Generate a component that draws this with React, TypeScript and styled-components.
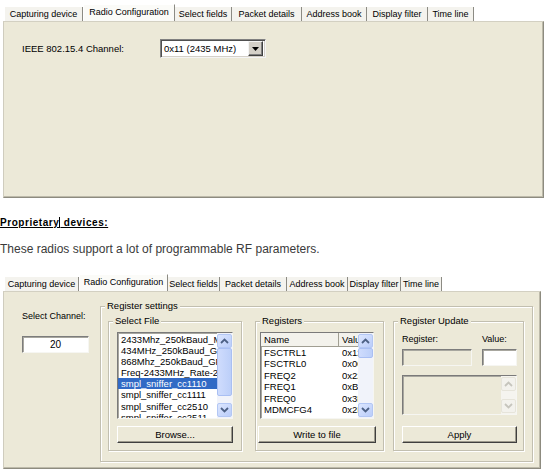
import React from "react";
import styled, { createGlobalStyle, css } from "styled-components";

const FACE = "#ECE9D8";

const GlobalStyle = createGlobalStyle`
  html, body { margin: 0; padding: 0; background: #fff; }
  body { font-family: "Liberation Sans", Arial, sans-serif; color: #000; }
`;

const Page = styled.div`
  width: 550px;
  height: 472px;
  overflow: hidden;
  box-sizing: border-box;
  padding-top: 4px;
  display: flex;
  flex-direction: column;
`;

const TabRow = styled.div`
  display: flex;
  align-items: flex-end;
  height: 17px;
  padding-left: 5px;
`;

const Tab = styled.div<{ $w: number; $active?: boolean }>`
  box-sizing: border-box;
  width: ${(p) => p.$w}px;
  height: ${(p) => (p.$active ? 17 : 14)}px;
  display: flex;
  align-items: center;
  justify-content: center;
  font-size: 9px;
  white-space: nowrap;
  background: #f4f3ee;
  border-right: 1px solid #8c8b84;
  ${(p) =>
    p.$active &&
    css`
      background: #fbfbf8;
      border-left: 1px solid #fff;
      border-top: 1px solid #fff;
      padding-bottom: 3px;
    `}
`;

const Panel = styled.div<{ $w: number; $h: number }>`
  box-sizing: border-box;
  margin-left: 3px;
  width: ${(p) => p.$w}px;
  height: ${(p) => p.$h}px;
  background: ${FACE};
  border: 1px solid;
  border-color: #d3d0c2 #8d8b7f #8d8b7f #cfccbe;
  box-shadow: inset -1px -1px 0 #bdbaaa;
`;

const ChannelRow = styled.div`
  display: flex;
  align-items: center;
  padding: 17px 0 0 18px;
  font-size: 9.5px;
`;

const FieldLabel = styled.span<{ $w: number }>`
  width: ${(p) => p.$w}px;
`;

const Combo = styled.div`
  box-sizing: border-box;
  width: 106px;
  height: 19px;
  display: flex;
  align-items: center;
  justify-content: space-between;
  padding: 0 2px 0 3px;
  background: #fff;
  border: 1px solid;
  border-color: #808080 #f4f4f4 #f4f4f4 #808080;
  box-shadow: inset 1px 1px 0 #505050, inset -1px -1px 0 #d4d0c8;
  font-size: 9.5px;
`;

const ComboButton = styled.div`
  box-sizing: border-box;
  width: 15px;
  height: 15px;
  display: flex;
  align-items: center;
  justify-content: center;
  background: #d4d0c8;
  border: 1px solid;
  border-color: #f4f4f4 #404040 #404040 #f4f4f4;
  box-shadow: inset -1px -1px 0 #808080;
`;

const Heading = styled.div`
  margin-top: 18px;
  line-height: 13px;
  font-size: 10px;
  font-weight: bold;
  letter-spacing: 0.55px;
  text-decoration: underline;
`;

const Caret = styled.span`
  display: inline-block;
  width: 1px;
  height: 11px;
  margin-bottom: -2px;
  background: #000;
`;

const Paragraph = styled.p`
  margin: 14px 0 18px;
  line-height: 13px;
  font-size: 12px;
  color: #3a3a3a;
`;

const RadioBody = styled.div`
  display: flex;
  padding: 14px 0 0 18px;
  font-size: 9px;
`;

const ChannelColumn = styled.div`
  width: 78px;
  display: flex;
  flex-direction: column;
`;

const SmallLabel = styled.div<{ $w?: number }>`
  line-height: 12px;
  ${(p) => p.$w && `width: ${p.$w}px;`}
`;

const ChannelLabel = styled(SmallLabel)`
  margin-top: 4px;
`;

const TextBox = styled.div<{ $w: number; $h: number; $disabled?: boolean; $center?: boolean }>`
  box-sizing: border-box;
  width: ${(p) => p.$w}px;
  height: ${(p) => p.$h}px;
  display: flex;
  align-items: center;
  justify-content: ${(p) => (p.$center ? "center" : "flex-start")};
  background: ${(p) => (p.$disabled ? FACE : "#fff")};
  border: 1px solid;
  border-color: #7c7c7c #f6f6f2 #f6f6f2 #7c7c7c;
  box-shadow: inset 1px 1px 0 #a8a79f;
  font-size: 10px;
`;

const ChannelBox = styled(TextBox)`
  margin-top: 14px;
`;

const GroupBox = styled.div<{ $w: number; $h: number; $ml?: number }>`
  box-sizing: border-box;
  width: ${(p) => p.$w}px;
  height: ${(p) => p.$h}px;
  margin-left: ${(p) => p.$ml ?? 0}px;
  display: flex;
  flex-direction: column;
  border: 1px solid #c2bfb0;
  box-shadow: inset 1px 1px 0 #fff, 1px 1px 0 #fff;
`;

const Caption = styled.div`
  align-self: flex-start;
  margin: -7px 0 0 4px;
  padding: 0 2px;
  line-height: 12px;
  background: ${FACE};
  font-size: 9.5px;
  white-space: nowrap;
`;

const InnerRow = styled.div`
  display: flex;
  margin-top: 9px;
  padding-left: 7px;
`;

const BoxContent = styled.div<{ $pl: number }>`
  flex: 1;
  display: flex;
  flex-direction: column;
  padding: 0 0 7px ${(p) => p.$pl}px;
`;

const ListFrame = styled.div<{ $w: number; $h: number; $mt?: number; $disabled?: boolean }>`
  box-sizing: border-box;
  width: ${(p) => p.$w}px;
  height: ${(p) => p.$h}px;
  margin-top: ${(p) => p.$mt ?? 5}px;
  display: flex;
  overflow: hidden;
  background: ${(p) => (p.$disabled ? FACE : "#fff")};
  border: 1px solid;
  border-color: #7a7a7a #f6f6f2 #f6f6f2 #7a7a7a;
  box-shadow: inset 1px 1px 0 #a8a79f;
`;

const ListItems = styled.div`
  flex: 1;
  min-width: 0;
  overflow: hidden;
  padding-top: 1px;
`;

const ListItem = styled.div<{ $selected?: boolean }>`
  height: 11.1px;
  line-height: 11px;
  padding-left: 3px;
  font-size: 9.5px;
  white-space: nowrap;
  overflow: hidden;
  ${(p) =>
    p.$selected &&
    css`
      background: #316ac5;
      color: #fff;
    `}
`;

const Grid = styled.div`
  flex: 1;
  min-width: 0;
  display: flex;
  flex-direction: column;
  overflow: hidden;
`;

const GridRow = styled.div<{ $header?: boolean }>`
  display: flex;
  flex-shrink: 0;
  height: ${(p) => (p.$header ? "13px" : "11.4px")};
  line-height: ${(p) => (p.$header ? "13px" : "11px")};
  font-size: 9.5px;
  ${(p) =>
    p.$header &&
    css`
      background: #f3f2ec;
      border-bottom: 1px solid #a09e92;
    `}
`;

const GridCell = styled.div<{ $w: number; $header?: boolean }>`
  box-sizing: border-box;
  width: ${(p) => p.$w}px;
  flex-shrink: 0;
  padding-left: 3px;
  overflow: hidden;
  white-space: nowrap;
  ${(p) => p.$header && `border-right: 1px solid #a09e92;`}
`;

const Scroll = styled.div<{ $disabled?: boolean }>`
  width: 15px;
  flex-shrink: 0;
  display: flex;
  flex-direction: column;
  padding: 1px 0;
  box-sizing: border-box;
  background: ${(p) => (p.$disabled ? "#f5f4ef" : "#f1f3fa")};
`;

const ScrollButton = styled.div<{ $disabled?: boolean }>`
  box-sizing: border-box;
  height: 14px;
  flex-shrink: 0;
  display: flex;
  align-items: center;
  justify-content: center;
  border-radius: 2px;
  border: 1px solid ${(p) => (p.$disabled ? "#e6e4da" : "#b3c7f4")};
  background: ${(p) => (p.$disabled ? "#f3f2ed" : "linear-gradient(135deg, #dce6fe, #bacdfa)")};
`;

const ScrollThumb = styled.div<{ $h: number }>`
  box-sizing: border-box;
  height: ${(p) => p.$h}px;
  flex-shrink: 0;
  border-radius: 2px;
  border: 1px solid #a9bff3;
  background: linear-gradient(90deg, #cfdcfd, #bccff9);
`;

const ScrollSpace = styled.div`
  flex: 1;
`;

const PushButton = styled.div<{ $w: number; $ml?: number }>`
  box-sizing: border-box;
  width: ${(p) => p.$w}px;
  height: 17px;
  margin-top: auto;
  margin-left: ${(p) => p.$ml ?? 0}px;
  display: flex;
  align-items: center;
  justify-content: center;
  background: ${FACE};
  border: 1px solid;
  border-color: #fff #3f3f3f #3f3f3f #fff;
  box-shadow: inset -1px -1px 0 #9d9a8c;
  font-size: 9.5px;
`;

const FieldRow = styled.div<{ $mt: number }>`
  display: flex;
  align-items: center;
  margin-top: ${(p) => p.$mt}px;
`;

const Gap = styled.div<{ $w: number }>`
  width: ${(p) => p.$w}px;
  flex-shrink: 0;
`;

const Chevron = ({ up, disabled }: { up?: boolean; disabled?: boolean }) => (
  <svg width="9" height="6" viewBox="0 0 9 6">
    <path
      d={up ? "M1 5 L4.5 1.5 L8 5" : "M1 1 L4.5 4.5 L8 1"}
      fill="none"
      stroke={disabled ? "#c6c5bd" : "#4d6185"}
      strokeWidth="1.8"
    />
  </svg>
);

const ScrollBar = ({ thumb, disabled }: { thumb?: number; disabled?: boolean }) => (
  <Scroll $disabled={disabled}>
    <ScrollButton $disabled={disabled}>
      <Chevron up disabled={disabled} />
    </ScrollButton>
    {thumb ? <ScrollThumb $h={thumb} /> : null}
    <ScrollSpace />
    <ScrollButton $disabled={disabled}>
      <Chevron disabled={disabled} />
    </ScrollButton>
  </Scroll>
);

const tabLabels = [
  "Capturing device",
  "Radio Configuration",
  "Select fields",
  "Packet details",
  "Address book",
  "Display filter",
  "Time line",
];

const TabStrip = ({ widths }: { widths: number[] }) => (
  <TabRow>
    {tabLabels.map((label, i) => (
      <Tab key={label} $w={widths[i]} $active={i === 1}>
        {label}
      </Tab>
    ))}
  </TabRow>
);

const files = [
  "2433Mhz_250kBaud_Modem",
  "434MHz_250kBaud_GFSK",
  "868Mhz_250kBaud_GFSK",
  "Freq-2433MHz_Rate-250k",
  "smpl_sniffer_cc1110",
  "smpl_sniffer_cc1111",
  "smpl_sniffer_cc2510",
  "smpl_sniffer_cc2511",
];

const registers: [string, string][] = [
  ["FSCTRL1", "0x12"],
  ["FSCTRL0", "0x00"],
  ["FREQ2", "0x22"],
  ["FREQ1", "0xB1"],
  ["FREQ0", "0x3B"],
  ["MDMCFG4", "0x2D"],
  ["MDMCFG3", "0x3B"],
];

const App: React.FC = () => (
  <Page>
    <GlobalStyle />
    <TabStrip widths={[78, 92, 57, 70, 65, 61, 46]} />
    <Panel $w={541} $h={177}>
      <ChannelRow>
        <FieldLabel $w={138}>IEEE 802.15.4 Channel:</FieldLabel>
        <Combo>
          <span>0x11 (2435 MHz)</span>
          <ComboButton>
            <svg width="7" height="4" viewBox="0 0 7 4">
              <polygon points="0,0 7,0 3.5,4" fill="#000" />
            </svg>
          </ComboButton>
        </Combo>
      </ChannelRow>
    </Panel>

    <Heading>
      Proprietary<Caret /> devices:
    </Heading>
    <Paragraph>These radios support a lot of programmable RF parameters.</Paragraph>

    <TabStrip widths={[74, 89, 52, 67, 61, 53, 41]} />
    <Panel $w={538} $h={178}>
      <RadioBody>
        <ChannelColumn>
          <ChannelLabel>Select Channel:</ChannelLabel>
          <ChannelBox $w={67} $h={17} $center>
            20
          </ChannelBox>
        </ChannelColumn>

        <GroupBox $w={433} $h={156}>
          <Caption>Register settings</Caption>
          <InnerRow>
            <GroupBox $w={134} $h={130}>
              <Caption>Select File</Caption>
              <BoxContent $pl={8}>
                <ListFrame $w={116} $h={87}>
                  <ListItems>
                    {files.map((f, i) => (
                      <ListItem key={f} $selected={i === 4}>
                        {f}
                      </ListItem>
                    ))}
                  </ListItems>
                  <ScrollBar thumb={48} />
                </ListFrame>
                <PushButton $w={116}>Browse...</PushButton>
              </BoxContent>
            </GroupBox>

            <GroupBox $w={129} $h={130} $ml={13}>
              <Caption>Registers</Caption>
              <BoxContent $pl={4}>
                <ListFrame $w={114} $h={87}>
                  <Grid>
                    <GridRow $header>
                      <GridCell $w={78} $header>
                        Name
                      </GridCell>
                      <GridCell $w={22}>Value</GridCell>
                    </GridRow>
                    {registers.map(([name, value]) => (
                      <GridRow key={name}>
                        <GridCell $w={78}>{name}</GridCell>
                        <GridCell $w={20}>{value}</GridCell>
                      </GridRow>
                    ))}
                  </Grid>
                  <ScrollBar thumb={10} />
                </ListFrame>
                <PushButton $w={118} $ml={-2}>
                  Write to file
                </PushButton>
              </BoxContent>
            </GroupBox>

            <GroupBox $w={131} $h={130} $ml={9}>
              <Caption>Register Update</Caption>
              <BoxContent $pl={8}>
                <FieldRow $mt={6}>
                  <SmallLabel $w={80}>Register:</SmallLabel>
                  <SmallLabel>Value:</SmallLabel>
                </FieldRow>
                <FieldRow $mt={4}>
                  <TextBox $w={70} $h={17} $disabled />
                  <Gap $w={10} />
                  <TextBox $w={35} $h={17} />
                </FieldRow>
                <ListFrame $w={115} $h={40} $mt={9} $disabled>
                  <ListItems />
                  <ScrollBar disabled />
                </ListFrame>
                <PushButton $w={115}>Apply</PushButton>
              </BoxContent>
            </GroupBox>
          </InnerRow>
        </GroupBox>
      </RadioBody>
    </Panel>
  </Page>
);

export default App;
